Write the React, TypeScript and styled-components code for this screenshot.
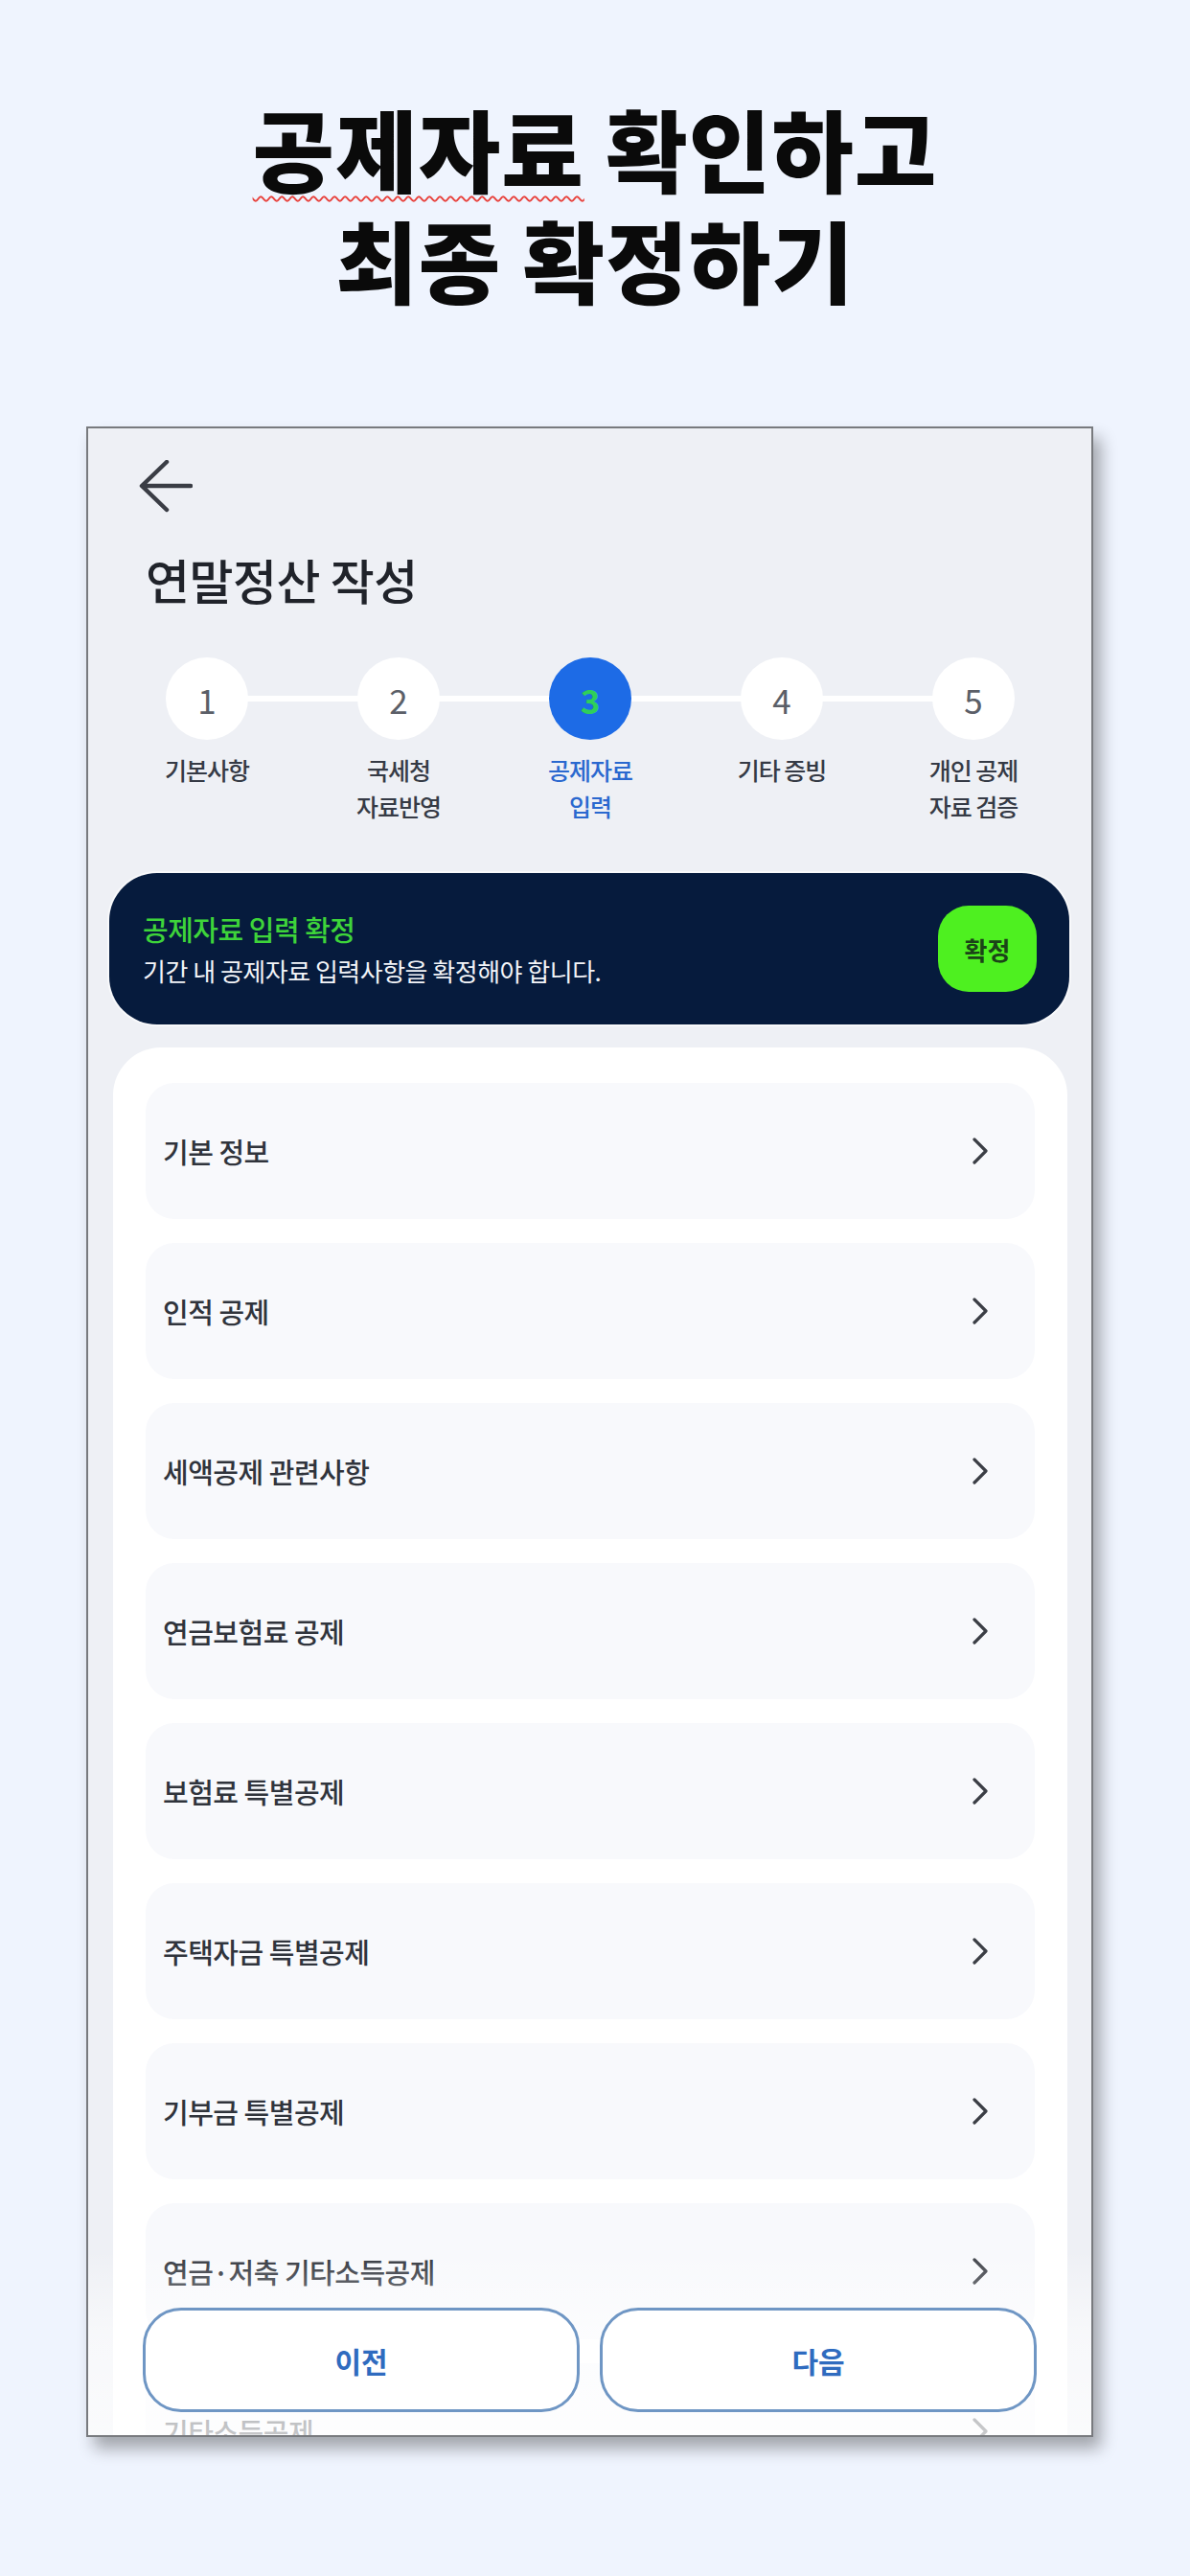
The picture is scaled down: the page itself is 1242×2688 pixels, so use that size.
import React from 'react';
import styled, { createGlobalStyle } from 'styled-components';

const GlobalStyle = createGlobalStyle`
  html, body {
    margin: 0;
    padding: 0;
    background: #eff4fe;
  }
  body {
    font-family: "Noto Sans CJK KR", "Noto Sans", sans-serif;
  }
`;

const Page = styled.div`
  width: 1242px;
  height: 2688px;
  display: flex;
  flex-direction: column;
  background: #eff4fe;
  overflow: hidden;
`;

const Headline = styled.h1`
  margin: 96px 0 0;
  height: 232px;
  text-align: center;
  font-size: 93px;
  line-height: 116px;
  font-weight: 900;
  letter-spacing: 1px;
  color: #0a0a0a;
`;

const Squiggle = styled.span`
  text-decoration: underline wavy #e8413c;
  text-decoration-thickness: 2px;
  text-underline-offset: 10px;
`;

const Phone = styled.div`
  position: relative;
  margin: 117px 0 0 90px;
  width: 1047px;
  height: 2094px;
  border: 2px solid #787a7e;
  background: #eef0f5;
  overflow: hidden;
  box-shadow: 8px 12px 16px rgba(0, 0, 0, 0.32);
`;

const TopBar = styled.div`
  display: flex;
  align-items: center;
  padding: 33px 0 0 53px;
  height: 56px;
`;

const ScreenTitle = styled.h2`
  margin: 36px 0 0 60px;
  font-size: 50px;
  line-height: 64px;
  font-weight: 500;
  color: #20232a;
  letter-spacing: -0.5px;
`;

const Stepper = styled.div`
  display: grid;
  grid-template-columns: repeat(5, 200px);
  padding-left: 24px;
  margin-top: 50px;
`;

const Step = styled.div<{ last?: boolean }>`
  position: relative;
  display: flex;
  flex-direction: column;
  align-items: center;

  &::after {
    content: '';
    display: ${p => (p.last ? 'none' : 'block')};
    position: absolute;
    top: 40px;
    left: 100px;
    width: 200px;
    height: 6px;
    background: #ffffff;
    z-index: 0;
  }
`;

const Circle = styled.div<{ active?: boolean }>`
  position: relative;
  z-index: 1;
  width: 86px;
  height: 86px;
  border-radius: 50%;
  display: flex;
  align-items: center;
  justify-content: center;
  background: ${p => (p.active ? '#1d6be6' : '#ffffff')};
  color: ${p => (p.active ? '#2fcf5a' : '#5b5f68')};
  font-size: 35px;
  font-weight: ${p => (p.active ? 700 : 400)};
`;

const StepLabel = styled.div<{ active?: boolean }>`
  margin-top: 12px;
  text-align: center;
  font-size: 25px;
  line-height: 38px;
  font-weight: 500;
  letter-spacing: -1px;
  color: ${p => (p.active ? '#2a68cf' : '#353a45')};
`;

const Banner = styled.div`
  margin: 51px 23px 0 22px;
  height: 158px;
  border-radius: 50px;
  background: #061b3d;
  display: flex;
  align-items: center;
  justify-content: space-between;
  padding: 0 34px 0 35px;
  box-shadow: 0 0 0 2px rgba(255, 255, 255, 0.6);
`;

const BannerText = styled.div`
  display: flex;
  flex-direction: column;
  gap: 6px;
`;

const BannerTitle = styled.div`
  font-size: 29px;
  line-height: 40px;
  font-weight: 500;
  color: #3ed43a;
  letter-spacing: -0.5px;
`;

const BannerDesc = styled.div`
  font-size: 26px;
  line-height: 36px;
  font-weight: 400;
  color: #f2f4f8;
  letter-spacing: -0.5px;
`;

const ConfirmButton = styled.button`
  width: 103px;
  height: 90px;
  border: none;
  border-radius: 32px;
  background: #4ef020;
  color: #1b4318;
  font-family: inherit;
  font-size: 26px;
  font-weight: 700;
  cursor: pointer;
`;

const ListCard = styled.div`
  margin: 24px 25px 0 26px;
  padding: 37px 34px 0;
  background: #ffffff;
  border-radius: 50px;
  display: flex;
  flex-direction: column;
  gap: 25px;
`;

const Row = styled.div`
  height: 142px;
  flex-shrink: 0;
  border-radius: 30px;
  background: #f8f9fc;
  display: flex;
  align-items: center;
  justify-content: space-between;
  padding: 0 46px 0 18px;
`;

const RowLabel = styled.span`
  font-size: 29px;
  font-weight: 500;
  color: #30343c;
  letter-spacing: -0.5px;
`;

const Footer = styled.div`
  position: absolute;
  left: 0;
  right: 0;
  bottom: 0;
  padding: 60px 57px 24px;
  display: flex;
  gap: 21px;
  background: linear-gradient(
    to bottom,
    rgba(255, 255, 255, 0) 0%,
    rgba(255, 255, 255, 0.55) 45%,
    rgba(255, 255, 255, 0.72) 100%
  );
`;

const NavButton = styled.button`
  flex: 1;
  height: 109px;
  border: 3px solid #6f96c4;
  border-radius: 40px;
  background: #ffffff;
  color: #2f6bbf;
  font-family: inherit;
  font-size: 30px;
  font-weight: 600;
  cursor: pointer;
`;

const BackArrow = () => (
  <svg width="56" height="56" viewBox="0 0 56 56" fill="none">
    <path
      d="M54 27H4M29 2L3 27L29 52"
      stroke="#3a3d45"
      strokeWidth="4.5"
      strokeLinecap="round"
      strokeLinejoin="round"
    />
  </svg>
);

const Chevron = () => (
  <svg width="22" height="30" viewBox="0 0 22 30" fill="none">
    <path
      d="M5 3L17 15L5 27"
      stroke="#3b3e45"
      strokeWidth="3.2"
      strokeLinecap="round"
      strokeLinejoin="round"
    />
  </svg>
);

const steps = [
  { n: 1, label: ['기본사항'] },
  { n: 2, label: ['국세청', '자료반영'] },
  { n: 3, label: ['공제자료', '입력'] },
  { n: 4, label: ['기타 증빙'] },
  { n: 5, label: ['개인 공제', '자료 검증'] },
];

const rows = [
  '기본 정보',
  '인적 공제',
  '세액공제 관련사항',
  '연금보험료 공제',
  '보험료 특별공제',
  '주택자금 특별공제',
  '기부금 특별공제',
  '연금·저축 기타소득공제',
  '기타소득공제',
];

const App: React.FC = () => {
  const current = 3;

  return (
    <Page>
      <GlobalStyle />
      <Headline>
        <Squiggle>공제자료</Squiggle> 확인하고
        <br />
        최종 확정하기
      </Headline>

      <Phone>
        <TopBar>
          <BackArrow />
        </TopBar>
        <ScreenTitle>연말정산 작성</ScreenTitle>

        <Stepper>
          {steps.map((s, i) => (
            <Step key={s.n} last={i === steps.length - 1}>
              <Circle active={s.n === current}>{s.n}</Circle>
              <StepLabel active={s.n === current}>
                {s.label.map(line => (
                  <div key={line}>{line}</div>
                ))}
              </StepLabel>
            </Step>
          ))}
        </Stepper>

        <Banner>
          <BannerText>
            <BannerTitle>공제자료 입력 확정</BannerTitle>
            <BannerDesc>기간 내 공제자료 입력사항을 확정해야 합니다.</BannerDesc>
          </BannerText>
          <ConfirmButton>확정</ConfirmButton>
        </Banner>

        <ListCard>
          {rows.map(r => (
            <Row key={r}>
              <RowLabel>{r}</RowLabel>
              <Chevron />
            </Row>
          ))}
        </ListCard>

        <Footer>
          <NavButton>이전</NavButton>
          <NavButton>다음</NavButton>
        </Footer>
      </Phone>
    </Page>
  );
};

export default App;
